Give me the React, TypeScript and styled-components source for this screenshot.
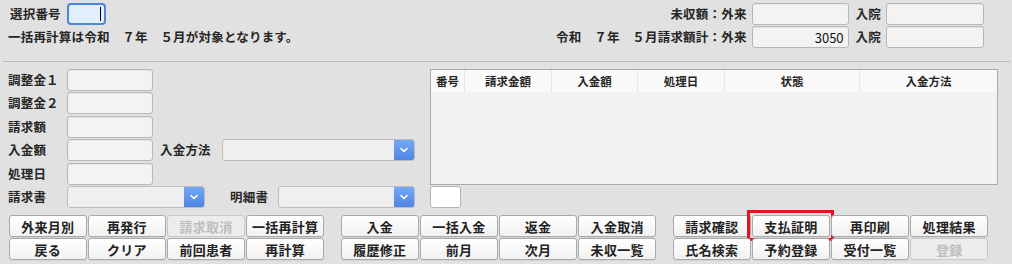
import React from "react";
import styled, { createGlobalStyle } from "styled-components";

const Global = createGlobalStyle`
  html, body { margin: 0; padding: 0; background: #e1e1e1; }
  body {
    font-family: "Noto Sans CJK JP", "Noto Sans", sans-serif;
    font-size: 12.5px;
    font-weight: 600;
    color: #262626;
  }
  * { box-sizing: border-box; }
`;

const Page = styled.div`
  width: 1012px;
  height: 264px;
  overflow: hidden;
  background: #e1e1e1;
  position: relative;
`;

const Header = styled.div`
  display: flex;
  justify-content: space-between;
  height: 61px;
  padding: 3px 28px 0 8px;
`;

const HeaderLeft = styled.div`
  display: flex;
  flex-direction: column;
  gap: 1px;
`;

const HeaderRight = styled.div`
  display: grid;
  grid-template-columns: auto 97px auto 98px;
  grid-auto-rows: 22px;
  row-gap: 1px;
  align-items: center;
`;

const Line = styled.div`
  display: flex;
  align-items: center;
  height: 22px;
`;

const Label = styled.span<{ $w?: number; $ml?: number; $mr?: number; $right?: boolean }>`
  display: inline-block;
  width: ${(p) => (p.$w ? `${p.$w}px` : "auto")};
  margin-left: ${(p) => p.$ml ?? 0}px;
  margin-right: ${(p) => p.$mr ?? 0}px;
  text-align: ${(p) => (p.$right ? "right" : "left")};
  white-space: pre;
  line-height: 22px;
  letter-spacing: 0.2px;
`;

const Field = styled.div<{ $w: number; $align?: string }>`
  width: ${(p) => p.$w}px;
  height: 22px;
  background: #f3f3f3;
  border: 1px solid #b7b7b7;
  border-radius: 3px;
  box-shadow: inset 0 1px 1px rgba(0, 0, 0, 0.06);
  display: flex;
  align-items: center;
  justify-content: ${(p) => p.$align ?? "flex-start"};
  padding: 0 4px;
  font-size: 13px;
  font-weight: 400;
  color: #111;
`;

const FocusField = styled.div`
  width: 39px;
  height: 22px;
  background: #e2efff;
  border: 2px solid #4f86db;
  border-radius: 4px;
  display: flex;
  align-items: center;
  justify-content: flex-end;
  padding-right: 3px;
`;

const Caret = styled.span`
  display: block;
  width: 1px;
  height: 14px;
  background: #000;
`;

const Divider = styled.div`
  margin: 0 2px 0 3px;
  height: 1px;
  background: #bcbcbc;
`;

const Middle = styled.div`
  display: flex;
  padding: 7px 15px 0 8px;
  gap: 15px;
`;

const Form = styled.div`
  width: 407px;
  display: flex;
  flex-direction: column;
  gap: 1.4px;
`;

const Select = styled.div<{ $w: number }>`
  width: ${(p) => p.$w}px;
  height: 22px;
  display: flex;
  background: #efefef;
  border: 1px solid #bcbcbc;
  border-radius: 3px;
  overflow: hidden;
`;

const SelectBody = styled.div`
  flex: 1;
`;

const SelectBtn = styled.div`
  width: 20px;
  background: linear-gradient(#75a8f4, #4f85e4);
  display: flex;
  align-items: center;
  justify-content: center;
`;

const TableCol = styled.div`
  display: flex;
  flex-direction: column;
  gap: 1px;
`;

const Table = styled.div`
  width: 568px;
  height: 116px;
  border: 1px solid #ababab;
  background: #f2f2f2;
`;

const HeadRow = styled.div`
  display: flex;
  height: 22px;
  background: #f9f9f9;
`;

const HeadCell = styled.div<{ $w: number; $last?: boolean }>`
  width: ${(p) => p.$w}px;
  flex: ${(p) => (p.$last ? "1" : "none")};
  display: flex;
  align-items: center;
  justify-content: center;
  border-right: ${(p) => (p.$last ? "none" : "1px solid #e6e6e6")};
  font-size: 11.5px;
`;

const SmallBox = styled.div`
  width: 31px;
  height: 22px;
  background: #fff;
  border: 1px solid #b5b5b5;
  border-radius: 3px;
`;

const ButtonBar = styled.div`
  display: flex;
  padding: 7px 0 0 9px;
  gap: 17px;
`;

const Group = styled.div`
  width: 315px;
  display: grid;
  grid-template-columns: repeat(4, 1fr);
  gap: 1px 1.5px;
`;

const Btn = styled.div<{ $disabled?: boolean }>`
  position: relative;
  height: 22px;
  border: 1px solid ${(p) => (p.$disabled ? "#c9c9c9" : "#a9a9a9")};
  border-radius: 3px;
  background: ${(p) =>
    p.$disabled ? "#ececec" : "linear-gradient(#ffffff, #f1f1f1)"};
  color: ${(p) => (p.$disabled ? "#bdbdbd" : "#222")};
  display: flex;
  align-items: center;
  justify-content: center;
  font-size: 13px;
  letter-spacing: 0.3px;
  box-shadow: ${(p) => (p.$disabled ? "none" : "0 1px 0 rgba(0,0,0,0.06)")};
`;

const Highlight = styled.div`
  position: absolute;
  top: -6px;
  left: -6px;
  right: -5px;
  bottom: -5px;
  border: 3px solid #e2151f;
  pointer-events: none;
`;

const Chevron = () => (
  <svg width="8" height="6" viewBox="0 0 8 6">
    <path d="M1 1.5 L4 4.5 L7 1.5" fill="none" stroke="#fff" strokeWidth="1.6" strokeLinecap="round" strokeLinejoin="round" />
  </svg>
);

const SelectBox = ({ w }: { w: number }) => (
  <Select $w={w}>
    <SelectBody />
    <SelectBtn>
      <Chevron />
    </SelectBtn>
  </Select>
);

type B = { t: string; d?: boolean; h?: boolean };

const groups: B[][] = [
  [
    { t: "外来月別" },
    { t: "再発行" },
    { t: "請求取消", d: true },
    { t: "一括再計算" },
    { t: "戻る" },
    { t: "クリア" },
    { t: "前回患者" },
    { t: "再計算" },
  ],
  [
    { t: "入金" },
    { t: "一括入金" },
    { t: "返金" },
    { t: "入金取消" },
    { t: "履歴修正" },
    { t: "前月" },
    { t: "次月" },
    { t: "未収一覧" },
  ],
  [
    { t: "請求確認" },
    { t: "支払証明", h: true },
    { t: "再印刷" },
    { t: "処理結果" },
    { t: "氏名検索" },
    { t: "予約登録" },
    { t: "受付一覧" },
    { t: "登録", d: true },
  ],
];

const columns = [
  { t: "番号", w: 34 },
  { t: "請求金額", w: 87 },
  { t: "入金額", w: 86 },
  { t: "処理日", w: 87 },
  { t: "状態", w: 135 },
  { t: "入金方法", w: 137, last: true },
];

export default function App() {
  return (
    <Page>
      <Global />
      <Header>
        <HeaderLeft>
          <Line>
            <Label $w={57} $ml={2}>選択番号</Label>
            <FocusField>
              <Caret />
            </FocusField>
          </Line>
          <Line>
            <Label>一括再計算は令和　７年　５月が対象となります。</Label>
          </Line>
        </HeaderLeft>
        <HeaderRight>
          <Label $right $mr={5}>未収額：外来</Label>
          <Field $w={97} />
          <Label $ml={7} $mr={5}>入院</Label>
          <Field $w={98} />
          <Label $right $mr={5}>令和　７年　５月請求額計：外来</Label>
          <Field $w={97} $align="flex-end">3050</Field>
          <Label $ml={7} $mr={5}>入院</Label>
          <Field $w={98} />
        </HeaderRight>
      </Header>
      <Divider />
      <Middle>
        <Form>
          <Line>
            <Label $w={59}>調整金１</Label>
            <Field $w={86} />
          </Line>
          <Line>
            <Label $w={59}>調整金２</Label>
            <Field $w={86} />
          </Line>
          <Line>
            <Label $w={59}>請求額</Label>
            <Field $w={86} />
          </Line>
          <Line>
            <Label $w={59}>入金額</Label>
            <Field $w={86} />
            <Label $w={62} $ml={7}>入金方法</Label>
            <SelectBox w={193} />
          </Line>
          <Line>
            <Label $w={59}>処理日</Label>
            <Field $w={86} />
          </Line>
          <Line>
            <Label $w={59}>請求書</Label>
            <SelectBox w={138} />
            <Label $w={48} $ml={25}>明細書</Label>
            <SelectBox w={137} />
          </Line>
        </Form>
        <TableCol>
          <Table>
            <HeadRow>
              {columns.map((c) => (
                <HeadCell key={c.t} $w={c.w} $last={c.last}>
                  {c.t}
                </HeadCell>
              ))}
            </HeadRow>
          </Table>
          <SmallBox />
        </TableCol>
      </Middle>
      <ButtonBar>
        {groups.map((g, gi) => (
          <Group key={gi}>
            {g.map((b) => (
              <Btn key={b.t} $disabled={b.d}>
                {b.t}
                {b.h && <Highlight />}
              </Btn>
            ))}
          </Group>
        ))}
      </ButtonBar>
    </Page>
  );
}
